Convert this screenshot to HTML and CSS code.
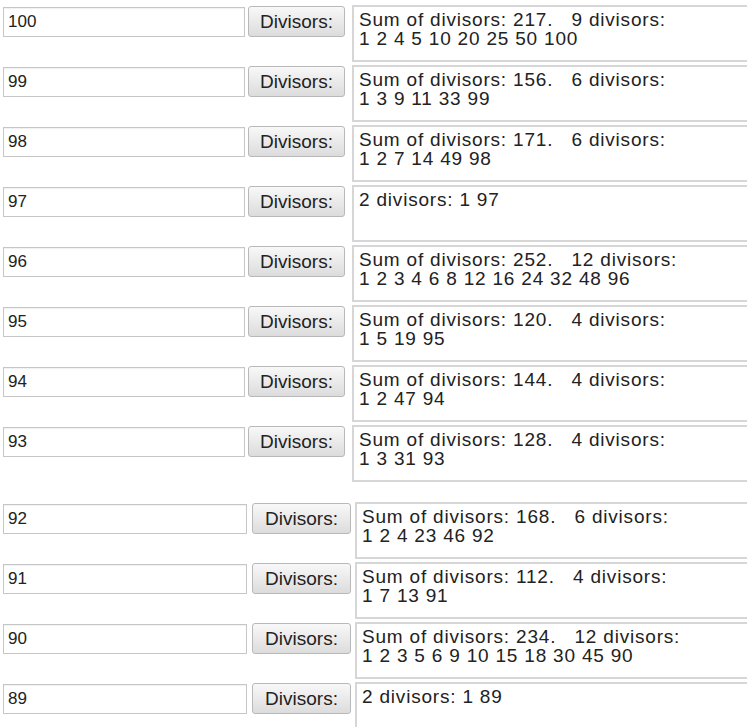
FILE: index.html
```html
<!DOCTYPE html>
<html>
<head>
<meta charset="utf-8">
<link rel="stylesheet" href="styles.css">
</head>
<body>
<div class="list">
  <div class="row"><input class="num" type="text" value="100"><button class="btn">Divisors:</button><div class="out">Sum of divisors: 217.&nbsp;&nbsp; 9 divisors:<br>1 2 4 5 10 20 25 50 100</div></div>
  <div class="row"><input class="num" type="text" value="99"><button class="btn">Divisors:</button><div class="out">Sum of divisors: 156.&nbsp;&nbsp; 6 divisors:<br>1 3 9 11 33 99</div></div>
  <div class="row"><input class="num" type="text" value="98"><button class="btn">Divisors:</button><div class="out">Sum of divisors: 171.&nbsp;&nbsp; 6 divisors:<br>1 2 7 14 49 98</div></div>
  <div class="row"><input class="num" type="text" value="97"><button class="btn">Divisors:</button><div class="out">2 divisors: 1 97</div></div>
  <div class="row"><input class="num" type="text" value="96"><button class="btn">Divisors:</button><div class="out">Sum of divisors: 252.&nbsp;&nbsp; 12 divisors:<br>1 2 3 4 6 8 12 16 24 32 48 96</div></div>
  <div class="row"><input class="num" type="text" value="95"><button class="btn">Divisors:</button><div class="out">Sum of divisors: 120.&nbsp;&nbsp; 4 divisors:<br>1 5 19 95</div></div>
  <div class="row"><input class="num" type="text" value="94"><button class="btn">Divisors:</button><div class="out">Sum of divisors: 144.&nbsp;&nbsp; 4 divisors:<br>1 2 47 94</div></div>
  <div class="row"><input class="num" type="text" value="93"><button class="btn">Divisors:</button><div class="out">Sum of divisors: 128.&nbsp;&nbsp; 4 divisors:<br>1 3 31 93</div></div>
</div>
<div class="list list-lower">
  <div class="row"><input class="num" type="text" value="92"><button class="btn">Divisors:</button><div class="out">Sum of divisors: 168.&nbsp;&nbsp; 6 divisors:<br>1 2 4 23 46 92</div></div>
  <div class="row"><input class="num" type="text" value="91"><button class="btn">Divisors:</button><div class="out">Sum of divisors: 112.&nbsp;&nbsp; 4 divisors:<br>1 7 13 91</div></div>
  <div class="row"><input class="num" type="text" value="90"><button class="btn">Divisors:</button><div class="out">Sum of divisors: 234.&nbsp;&nbsp; 12 divisors:<br>1 2 3 5 6 9 10 15 18 30 45 90</div></div>
  <div class="row"><input class="num" type="text" value="89"><button class="btn">Divisors:</button><div class="out">2 divisors: 1 89</div></div>
</div>
</body>
</html>
```

FILE: styles.css
```css
html, body {
  margin: 0;
  padding: 0;
  overflow: hidden;
  background: #ffffff;
}

body {
  font-family: "Liberation Sans", Arial, sans-serif;
  color: #222222;
  padding: 5px 0 0 3px;
}

.list {
  display: flex;
  flex-direction: column;
  gap: 3px;
}

.list-lower {
  margin-top: 20px;
}

.row {
  display: flex;
  align-items: flex-start;
}

.num,
.btn {
  flex-shrink: 0;
}

.num {
  box-sizing: border-box;
  width: 242px;
  height: 30px;
  margin: 2px 0 0 0;
  padding: 0 4px;
  border: 1px solid #c6c6c6;
  box-shadow: inset 0 1px 1px rgba(0, 0, 0, 0.06);
  font-family: "Liberation Sans", Arial, sans-serif;
  font-size: 17px;
  color: #222222;
  background: #ffffff;
  outline: none;
}

.btn {
  box-sizing: border-box;
  width: 97px;
  height: 31px;
  margin: 1px 0 0 3px;
  padding: 0;
  border: 1px solid #b9b9b9;
  border-radius: 3px;
  background: linear-gradient(#f8f8f8, #dcdcdc);
  font-family: "Liberation Sans", Arial, sans-serif;
  font-size: 19px;
  color: #222222;
}

.out {
  box-sizing: border-box;
  flex: 1 1 auto;
  min-width: 0;
  height: 57px;
  margin-left: 7px;
  padding: 3px 5px;
  border: 2px solid #d6d6d6;
  border-right: 0;
  font-size: 19px;
  line-height: 19px;
  letter-spacing: 0.8px;
  white-space: nowrap;
}

.list-lower .num {
  width: 244px;
}

.list-lower .btn {
  width: 99px;
  margin-left: 5px;
}

.list-lower .out {
  margin-left: 4px;
}
```
